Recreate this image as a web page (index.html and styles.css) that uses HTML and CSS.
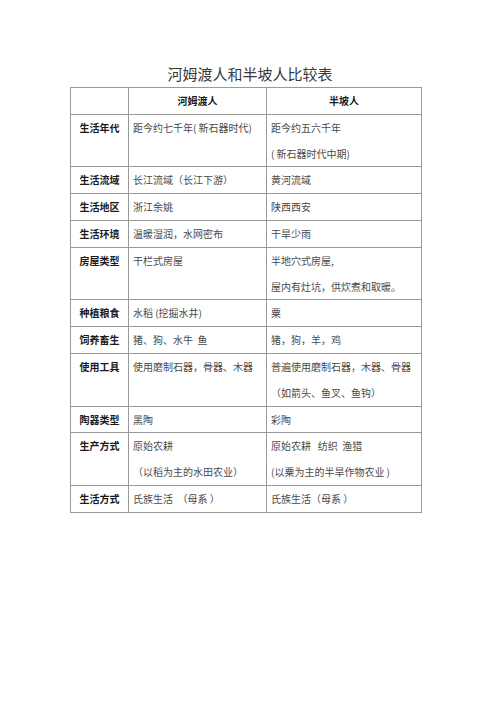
FILE: index.html
```html
<!DOCTYPE html>
<html lang="zh-CN">
<head>
<meta charset="utf-8">
<title>河姆渡人和半坡人比较表</title>
<link rel="stylesheet" href="styles.css">
</head>
<body>
<div class="page">
  <h1 class="title">河姆渡人和半坡人比较表</h1>
  <table class="cmp">
    <colgroup>
      <col class="c1"><col class="c2"><col class="c3">
    </colgroup>
    <thead>
      <tr><th></th><th>河姆渡人</th><th>半坡人</th></tr>
    </thead>
    <tbody>
      <tr><th>生活年代</th><td>距今约七千年( 新石器时代)</td><td>距今约五六千年<br>( 新石器时代中期)</td></tr>
      <tr><th>生活流域</th><td>长江流域（长江下游）</td><td>黄河流域</td></tr>
      <tr><th>生活地区</th><td>浙江余姚</td><td>陕西西安</td></tr>
      <tr><th>生活环境</th><td>温暖湿润，水网密布</td><td>干旱少雨</td></tr>
      <tr><th>房屋类型</th><td>干栏式房屋</td><td>半地穴式房屋,<br>屋内有灶坑，供炊煮和取暖。</td></tr>
      <tr><th>种植粮食</th><td>水稻 (挖掘水井)</td><td>粟</td></tr>
      <tr><th>饲养畜生</th><td>猪、狗、水牛&nbsp;&nbsp;鱼</td><td>猪，狗，羊，鸡</td></tr>
      <tr><th>使用工具</th><td>使用磨制石器，骨器、木器</td><td>普遍使用磨制石器，木器、骨器<br>（如箭头、鱼叉、鱼钩）</td></tr>
      <tr><th>陶器类型</th><td>黑陶</td><td>彩陶</td></tr>
      <tr><th>生产方式</th><td>原始农耕<br>（以稻为主的水田农业）</td><td>原始农耕&nbsp;&nbsp;&nbsp;纺织&nbsp;&nbsp;渔猎<br>(以粟为主的半旱作物农业 )</td></tr>
      <tr><th>生活方式</th><td>氏族生活&nbsp;&nbsp;（母系 ）</td><td>氏族生活（母系 ）</td></tr>
    </tbody>
  </table>
</div>
</body>
</html>
```

FILE: styles.css
```css
html, body {
  margin: 0;
  padding: 0;
  background: #ffffff;
}

body {
  font-family: "Noto Sans CJK SC", "Noto Sans", sans-serif;
  color: #444;
}

.page {
  width: 500px;
  height: 708px;
  padding-top: 63px;
  box-sizing: border-box;
}

.title {
  margin: 0 0 3px 0;
  font-size: 15px;
  line-height: 21px;
  font-weight: 400;
  color: #3a3a3a;
  text-align: center;
}

.cmp {
  margin-left: 70px;
  width: 351px;
  table-layout: fixed;
  border-collapse: collapse;
  font-size: 10px;
  line-height: 25.8px;
}

.c1 { width: 58px; }
.c2 { width: 138px; }
.c3 { width: 155px; }

.cmp th,
.cmp td {
  border: 1px solid #999;
  padding: 0 0 0 4px;
  vertical-align: top;
  text-align: left;
  white-space: nowrap;
}

.cmp th {
  font-weight: 700;
  color: #1a1a1a;
  text-align: center;
  padding: 0;
}

.cmp td {
  color: #4a4a4a;
}
```
